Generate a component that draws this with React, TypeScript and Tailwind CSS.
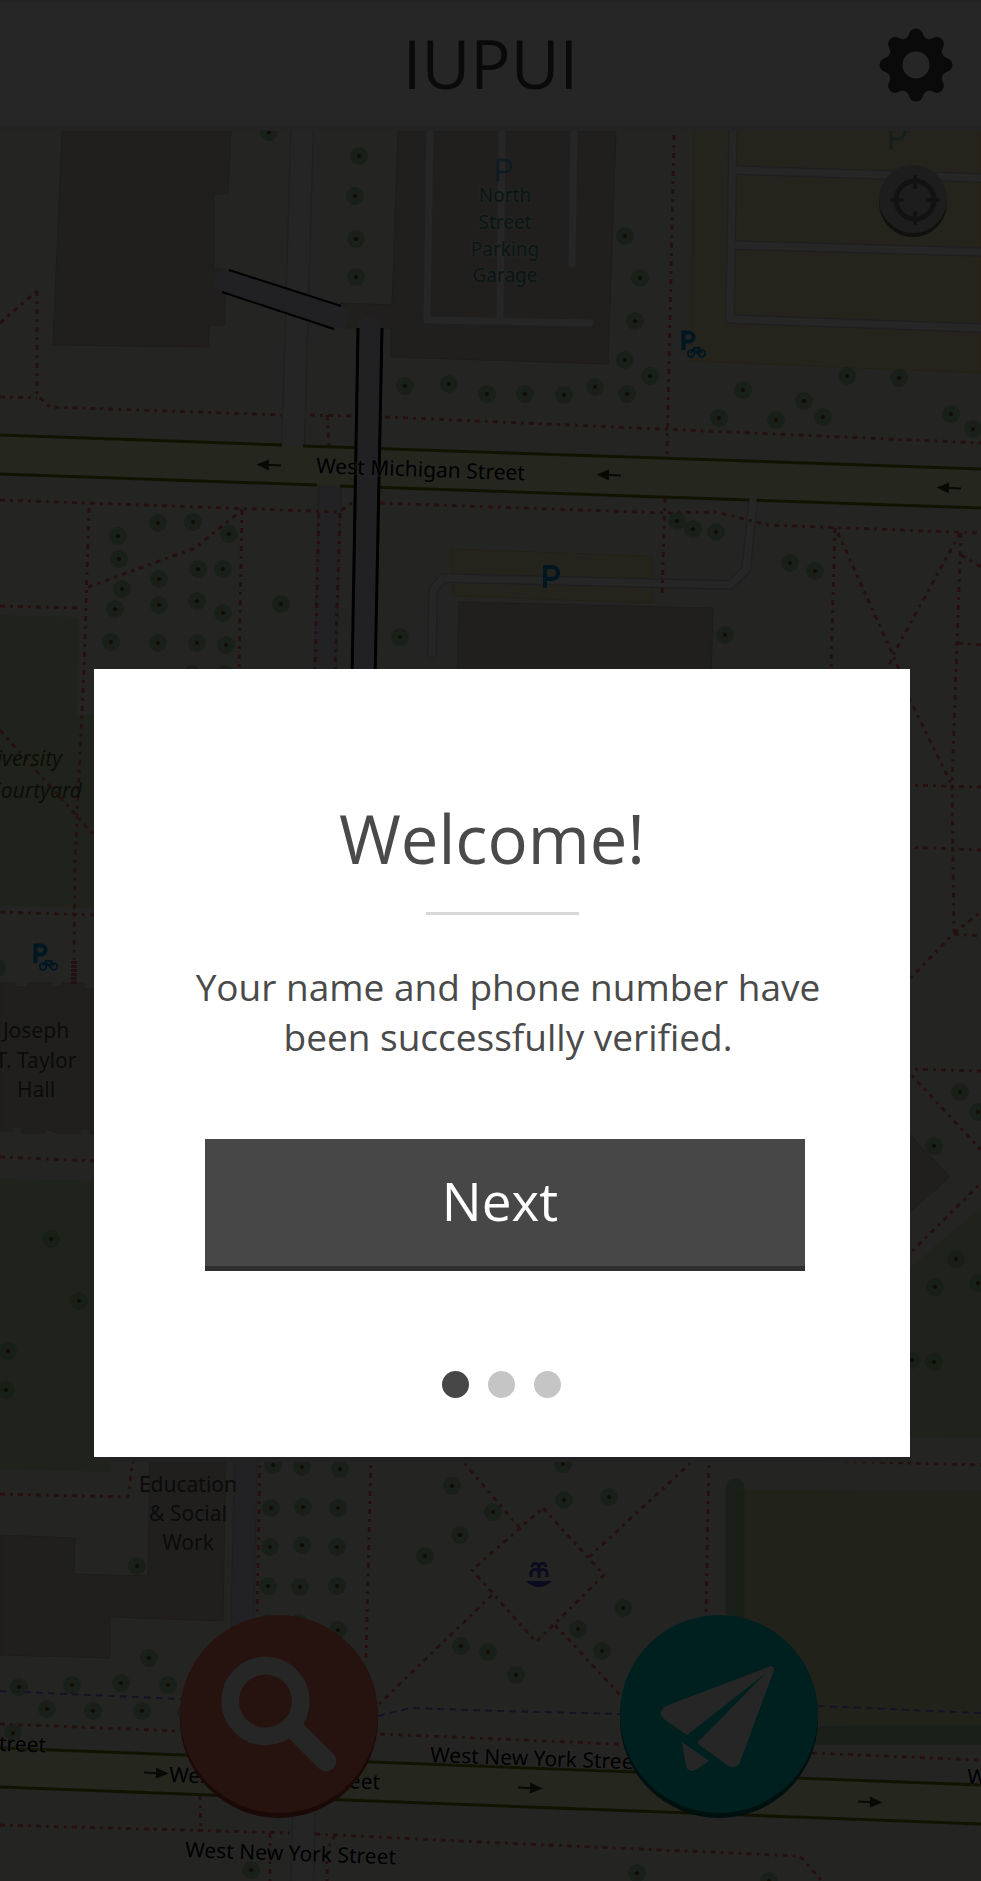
import React from "react";

type Point = [number, number];

const buildings = [
  "M62 131H231L228 194H214V268L225 270V325H210L208 347L53 345Z",
  "M398 131H616L608 364L391 357V328H346L340 303L392 305Z",
  "M459 602L713 608L711 680H457Z",
  "M0 983H15V987H28V983H51V987H62V983H84V989H120V1134H90V1129H80V1133H58L47 1129L44 1133H22V1127H12V1131H0Z",
  "M900 1124L950 1177L900 1221Z",
  "M150 1450H226L223 1621L110 1617V1658L0 1655V1535L75 1538L74 1574L148 1576Z",
];

const grass = [
  "M0 615L78 617L77 715H100V908L0 906Z",
  "M0 1179L110 1181V1472L0 1469Z",
  "M900 1276L981 1207V1438L900 1437Z",
];

const parking = ["M694 131H981V373L691 361Z", "M451 549L652 556V603L453 596Z"];

const lanes = [
  "M430 131L427 320L590 323",
  "M502 131L500 318",
  "M574 131L572 264",
  "M733 131L730 319L981 328",
  "M733 170L981 178",
  "M732 245L981 252",
  "M432 654L433 590L443 578L730 585L746 570L753 503",
];

const footways = [
  "M37 291V395L50 407L282 415",
  "M0 323L37 291",
  "M0 397L37 398",
  "M310 415L352 416",
  "M385 417L981 443",
  "M327 415L329 446",
  "M0 500L339 512L353 502",
  "M380 503L667 513L716 512L768 525L981 533",
  "M89 508L84 669L75 860L74 960",
  "M242 510L239 669",
  "M88 587L195 548L242 510",
  "M0 606L82 608",
  "M319 513L315 669",
  "M340 513L335 669",
  "M674 135L667 455",
  "M665 498L662 595",
  "M835 528L831 669",
  "M838 533L893 655L900 672",
  "M960 533L893 655L887 672",
  "M961 533L957 643L952 785L954 933L905 984",
  "M958 643L981 645",
  "M961 555L981 567",
  "M905 690L952 785",
  "M905 785L981 787",
  "M905 847L981 850",
  "M954 933L981 912",
  "M954 934L981 936",
  "M905 1069L981 1071",
  "M905 1068L981 1150",
  "M905 1258L981 1183",
  "M0 730L100 842",
  "M0 912L94 915",
  "M0 1157L94 1161",
  "M0 1494L128 1497L133 1460",
  "M260 1455L257 1615",
  "M371 1455L366 1660",
  "M458 1456L519 1527",
  "M698 1456L588 1558",
  "M543 1508L604 1575L536 1642L472 1570Z",
  "M492 1595L378 1705",
  "M555 1625L622 1697",
  "M709 1455L706 1612",
  "M700 1457L981 1465",
  "M0 1724L180 1731",
  "M380 1734L640 1745",
  "M812 1753L981 1760",
  "M0 1825L290 1833",
  "M315 1834L480 1842L800 1856L822 1881",
  "M200 1795L201 1832",
  "M270 1833V1881",
  "M335 1835L327 1850V1881",
];

const cycleways = [
  "M0 1691L182 1699",
  "M378 1716L410 1708L500 1711L620 1714",
  "M818 1706L981 1713",
];

const trees: Point[] = [
  [269, 132], [359, 156], [355, 196], [356, 239], [356, 277],
  [625, 236], [640, 278], [635, 321], [405, 386], [449, 384], [487, 394], [525, 394],
  [564, 395], [595, 387], [625, 360], [650, 376], [627, 394],
  [743, 390], [719, 418], [776, 420], [804, 401], [823, 417], [847, 376], [899, 378], [951, 414], [973, 429],
  [118, 536], [158, 523], [193, 522], [229, 534], [119, 559], [122, 589], [115, 609], [111, 642],
  [159, 579], [159, 605], [158, 643], [198, 569], [223, 569], [197, 601], [223, 613], [197, 643], [226, 645],
  [192, 674], [225, 674], [281, 604], [400, 637],
  [677, 521], [693, 529], [716, 532], [790, 563], [815, 571], [725, 635],
  [-3, 968], [51, 1239], [79, 1301], [8, 1351], [6, 1390],
  [960, 1092], [978, 1112], [934, 1146], [956, 1259], [935, 1287], [978, 1283], [912, 1360], [934, 1362],
  [273, 1465], [302, 1467], [340, 1469], [271, 1508], [303, 1507], [338, 1508],
  [270, 1547], [302, 1545], [337, 1547], [268, 1586], [300, 1587], [337, 1586], [268, 1623], [299, 1623], [338, 1630],
  [137, 1566], [452, 1486], [493, 1512], [460, 1535], [425, 1556], [461, 1646], [488, 1652], [516, 1675],
  [563, 1464], [564, 1500], [609, 1497], [623, 1608], [578, 1629], [602, 1651],
  [149, 1658], [19, 1687], [72, 1685], [121, 1683], [168, 1685], [47, 1709], [93, 1711], [142, 1711], [186, 1713], [13, 1733],
  [251, 1870], [637, 1873], [769, 1881],
];

function Arrow({ x, y, flip }: { x: number; y: number; flip?: boolean }) {
  return (
    <path
      d="M-11 0H4M2 -4L11 0L2 4Z"
      transform={`translate(${x} ${y}) rotate(${flip ? 182 : 2})`}
      className="fill-[#3a3d10] stroke-[#3a3d10] stroke-2"
    />
  );
}

function BikeParking({ x, y }: { x: number; y: number }) {
  return (
    <g transform={`translate(${x} ${y})`} className="fill-none stroke-[#0092da]">
      <path d="M2.5 20V2.500H8a4.500 4.500 0 0 1 0 9H3" strokeWidth="4" />
      <g strokeWidth="1.800">
        <circle cx="10" cy="23.500" r="3.300" />
        <circle cx="21" cy="23.500" r="3.300" />
        <path d="M10 23L13 18H18L21 23M12 18L16 23L19 17" />
      </g>
    </g>
  );
}

const roadLabels = [
  { x: 316, y: 473, text: "West Michigan Street" },
  { x: 169, y: 1782, text: "West New York Street" },
  { x: 430, y: 1762, text: "West New York Street" },
  { x: 185, y: 1857, text: "West New York Street" },
  { x: -165, y: 1745, text: "West New York Street" },
  { x: 967, y: 1784, text: "West New York Street" },
];

function CampusMap() {
  return (
    <svg
      className="absolute inset-0 h-full w-full bg-[#f2efe9] font-['Noto_Sans',sans-serif]"
      viewBox="0 131 981 1750"
      preserveAspectRatio="xMidYMin slice"
      role="img"
      aria-label="Campus map"
    >
      {grass.map((d) => (
        <path key={d} d={d} className="fill-[#d3eab2]" />
      ))}
      <path d="M735 1490L981 1491V1727L735 1723Z" className="fill-[#dde8b5]" />
      {parking.map((d) => (
        <path key={d} d={d} className="fill-[#f4eebb] stroke-[#e6dc8c] stroke-1" />
      ))}
      {buildings.map((d) => (
        <path key={d} d={d} className="fill-[#dbd1c8] stroke-[#c4b8ac] stroke-1" />
      ))}

      <g fill="none" strokeWidth="24" className="stroke-[#d2d2d8]">
        <path d="M302 131L293 450" />
        <path d="M304 1810L302 1881" />
        <path d="M330 483L325 680" />
        <path d="M246 1450L242 1640" />
      </g>
      <g fill="none" strokeWidth="21" className="stroke-[#f6f6fa]">
        <path d="M302 131L293 450" />
        <path d="M304 1810L302 1881" />
        <path d="M246 1450L242 1640" className="stroke-[#e4e4ee]" />
        <path d="M330 483L325 680" className="stroke-[#e4e4ee]" />
      </g>
      <g fill="none" strokeLinecap="round" strokeLinejoin="round">
        {lanes.map((d) => (
          <path key={d} d={d} strokeWidth="10" className="stroke-[#d2cfcf]" />
        ))}
        {lanes.map((d) => (
          <path key={d} d={d} strokeWidth="7" className="stroke-[#fafafa]" />
        ))}
      </g>

      <g fill="none" strokeWidth="3" strokeDasharray="5 5 3 5" className="stroke-[#f56a6a]">
        {footways.map((d) => (
          <path key={d} d={d} />
        ))}
      </g>
      <path d="M74 961V984" strokeWidth="6" strokeDasharray="3 1" className="stroke-[#f56a6a]" />
      <g fill="none" strokeWidth="2" strokeDasharray="7 5" className="stroke-[#8080f5]">
        {cycleways.map((d) => (
          <path key={d} d={d} />
        ))}
      </g>

      <path d="M0 435L981 469V508L0 474Z" className="fill-[#f9fac5]" />
      <path d="M0 1748L981 1785V1824L0 1787Z" className="fill-[#f9fac5]" />
      <g strokeWidth="3" className="stroke-[#707d05]">
        <path d="M0 435L282 445M303 446L750 461L981 469M0 474L317 485M340 486L981 508" />
        <path d="M0 1748L981 1785M0 1787L981 1824" />
      </g>
      <path d="M753 496V512" strokeWidth="7" className="stroke-[#fafafa]" />

      <path d="M225 281L338 317" strokeWidth="22" strokeLinecap="round" className="stroke-[#dadaee]" />
      <path d="M229 270L341 306M222 292L334 329" strokeWidth="2" stroke="#000" />
      <path d="M370 329L363 680" strokeWidth="24" strokeLinecap="round" className="stroke-[#dadaee]" />
      <path d="M358 328L352 680M382 328L375 680" strokeWidth="3" stroke="#000" />

      <path d="M735 1488V1735H981" fill="none" strokeWidth="19" strokeLinecap="round" strokeLinejoin="round" className="stroke-[#7cba80]/60" />
      {trees.map(([x, y]) => (
        <g key={`${x}-${y}`}>
          <circle cx={x} cy={y} r="9" className="fill-[#86c28a]/70" />
          <circle cx={x} cy={y} r="2" className="fill-[#7a4a10]" />
        </g>
      ))}

      <Arrow x={270} y={465} flip />
      <Arrow x={610} y={475} flip />
      <Arrow x={950} y={488} flip />
      <Arrow x={155} y={1773} />
      <Arrow x={529} y={1788} />
      <Arrow x={869} y={1802} />

      <BikeParking x={681} y={330} />
      <BikeParking x={33} y={943} />
      <g fill="none" strokeWidth="3" className="stroke-[#0092da]">
        <path d="M545 588V567H552a6 6 0 0 1 0 12H545" strokeWidth="4" />
        <path d="M498 181V160H505a6 6 0 0 1 0 12H498" opacity=".55" />
        <path d="M891 150V126H898a6 6 0 0 1 0 13H891" opacity=".4" />
      </g>
      <g transform="translate(526 1560)" fill="none" strokeWidth="3" className="stroke-[#4c4cd8]">
        <path d="M13 18V4M5 17V14a4 4 0 0 1 8-1a4 4 0 0 1 8 1V17M6 7a3.500 3.500 0 0 1 7 0a3.500 3.500 0 0 1 7 0" />
        <path d="M0 21H26Q20 27 13 27Q6 27 0 21Z" stroke="none" className="fill-[#4c4cd8]" />
      </g>

      <g className="text-[21px] fill-black stroke-white/40 stroke-3 [paint-order:stroke]">
        {roadLabels.map(({ x, y, text }) => (
          <text key={`${x}-${y}`} transform={`translate(${x} ${y}) rotate(2)`}>
            {text}
          </text>
        ))}
      </g>
      <g className="text-[21px] fill-[#4a4a4a]" textAnchor="middle">
        <text x="188" y="1492">Education</text>
        <text x="188" y="1521">&amp; Social</text>
        <text x="188" y="1550">Work</text>
        <text x="36" y="1038">Joseph</text>
        <text x="36" y="1068">T. Taylor</text>
        <text x="36" y="1097">Hall</text>
      </g>
      <g className="text-[19px] fill-[#3c9c88] stroke-white/30 stroke-3 [paint-order:stroke]" textAnchor="middle">
        <text x="505" y="202">North</text>
        <text x="505" y="229">Street</text>
        <text x="505" y="256">Parking</text>
        <text x="505" y="282">Garage</text>
      </g>
      <g className="text-[21px] italic fill-[#4f5c44]" textAnchor="end">
        <text x="62" y="766">University</text>
        <text x="82" y="798">Courtyard</text>
      </g>
    </svg>
  );
}

function gearPath(): string {
  const at = (x: number, y: number, turn: number) => {
    const a = (turn * Math.PI) / 4;
    return `${(x * Math.cos(a) - y * Math.sin(a)).toFixed(2)} ${(x * Math.sin(a) + y * Math.cos(a)).toFixed(2)}`;
  };
  let d = `M${at(-10.9, -26.3, 0)}`;
  for (let i = 0; i < 8; i++) {
    d += `C${at(-8, -27.5, i)} ${at(-7.5, -30, i)} ${at(-6.3, -32.5, i)}`;
    d += `C${at(-4.8, -35.5, i)} ${at(-2.5, -36.5, i)} ${at(0, -36.5, i)}`;
    d += `C${at(2.5, -36.5, i)} ${at(4.8, -35.5, i)} ${at(6.3, -32.5, i)}`;
    d += `C${at(7.5, -30, i)} ${at(8, -27.5, i)} ${at(10.9, -26.3, i)}`;
  }
  return d + "ZM13.5 0A13.5 13.5 0 1 0 -13.5 0A13.5 13.5 0 1 0 13.5 0Z";
}

function Header() {
  return (
    <header className="grid h-[131px] grid-cols-[1fr_auto_1fr] items-center border-t-3 border-b-5 border-t-[#e8e8e8] border-b-[#e8e8e8] bg-white px-7">
      <span />
      <h1 className="pb-1 text-[67px] leading-[72px] text-[#444]">IUPUI</h1>
      <button type="button" aria-label="Settings" className="justify-self-end">
        <svg viewBox="-37 -37 74 74" className="block size-[74px] fill-[#444]">
          <path d={gearPath()} fillRule="evenodd" />
        </svg>
      </button>
    </header>
  );
}

function MapControls() {
  return (
    <div className="relative flex flex-1 flex-col justify-between pt-[34px] pb-[68px]">
      <button
        type="button"
        aria-label="Show my location"
        className="mr-[34px] size-[68px] self-end rounded-full bg-[#c0c0c0] shadow-[0_4px_0_#6b6b55]"
      >
        <svg viewBox="0 0 68 68" className="block size-full fill-none stroke-[#777]">
          <circle cx="36" cy="35" r="19" strokeWidth="5" />
          <path d="M36 12V22M36 48V58M13 35H23M49 35H59" strokeWidth="4" strokeLinecap="round" />
        </svg>
      </button>
      <div className="flex justify-between pr-[163px] pl-[180px]">
        <button
          type="button"
          aria-label="Search"
          className="size-[198px] rounded-full bg-[#ff7a68] shadow-[0_5px_0_#b04034]"
        >
          <svg viewBox="0 0 198 198" className="block size-full fill-none stroke-white">
            <circle cx="85.500" cy="86" r="35.300" strokeWidth="17.700" />
            <path d="M114 114L146 146" strokeWidth="20.500" strokeLinecap="round" />
          </svg>
        </button>
        <button
          type="button"
          aria-label="Send"
          className="size-[198px] rounded-full bg-[#00d5cc] shadow-[0_5px_0_#006a60]"
        >
          <svg viewBox="0 0 198 198" className="block size-full fill-white">
            <path d="M67 120L44 104Q40 101 41 97Q42 93 46 91L151 51Q154 51 154 55L120 147Q118 152 113 152Q110 152 107 150L77 128L146 58Z" />
            <path d="M62 127L89 146L75 155Q72 157 69 155Q67 154 66 151Z" />
          </svg>
        </button>
      </div>
    </div>
  );
}

function WelcomeDialog() {
  return (
    <div className="absolute inset-0 bg-black/85 pt-[669px] pr-[71px] pl-[94px]">
      <section
        role="dialog"
        aria-modal="true"
        aria-labelledby="welcome-title"
        className="flex flex-col items-center bg-white pt-[125px] pb-[59px] text-[#4a4a4a] shadow-[0_5px_0_#222]"
      >
        <h2 id="welcome-title" className="pr-5 text-[67px] leading-[88px]">
          Welcome!
        </h2>
        <hr className="mt-[30px] w-[153px] border-t-3 border-[#d8d8d8]" />
        <p className="mt-[47px] pl-3 text-center text-[37px] leading-[50px]">
          Your name and phone number have
          <br />
          been successfully verified.
        </p>
        <button
          type="button"
          className="mt-[77px] ml-1.5 h-[132px] w-[600px] max-w-full border-b-5 border-[#2f2f2f] bg-[#474747] pr-2.5 pb-[3px] text-[53px] leading-[60px] text-white"
        >
          Next
        </button>
        <div className="mt-[100px] flex gap-[19px] pr-0.5">
          <span className="size-[27px] rounded-full bg-[#474747]" />
          <span className="size-[27px] rounded-full bg-[#c5c5c5]" />
          <span className="size-[27px] rounded-full bg-[#c5c5c5]" />
        </div>
      </section>
    </div>
  );
}

export default function App() {
  return (
    <main className="relative flex min-h-screen flex-col overflow-hidden font-['Open_Sans',sans-serif]">
      <Header />
      <div className="relative flex flex-1 flex-col">
        <CampusMap />
        <MapControls />
      </div>
      <WelcomeDialog />
    </main>
  );
}
